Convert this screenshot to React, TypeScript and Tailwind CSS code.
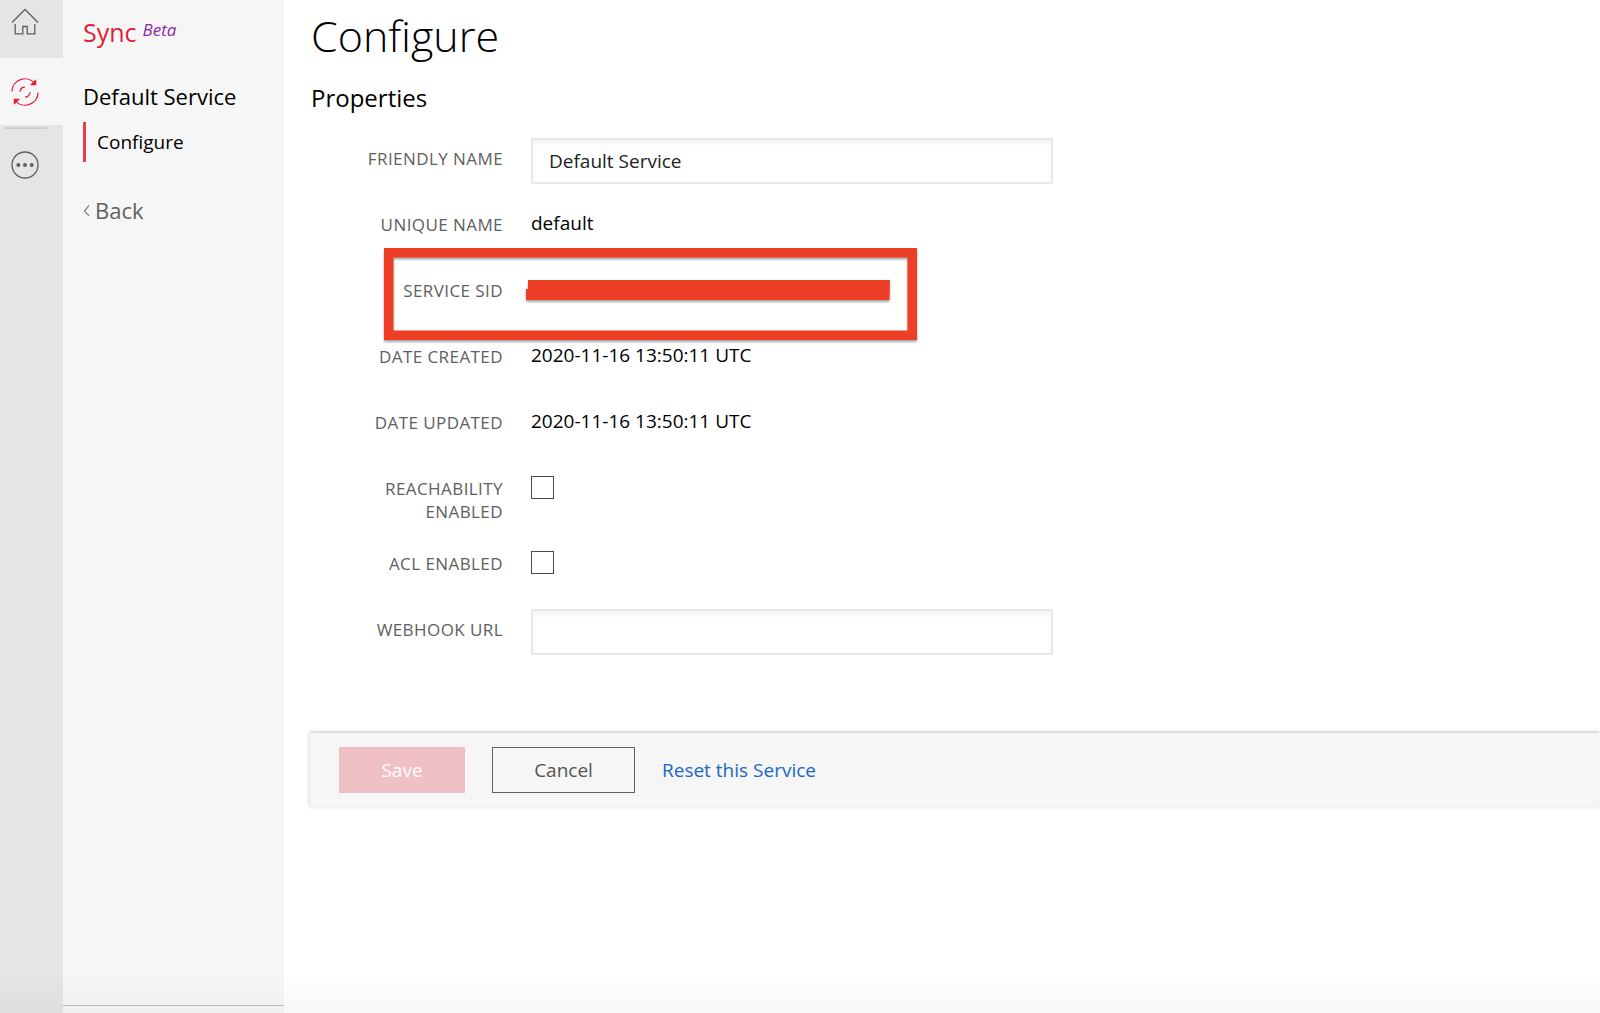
import React, { useState } from 'react';

const LABEL = 'w-[193px] shrink-0 pt-[9px] text-right text-[17px] leading-[23px] tracking-wide uppercase text-[#606060]';
const VALUE = 'pt-2 text-[19px] leading-[23px] text-black';
const INPUT = `h-[46px] w-full max-w-[522px] border-2 border-[#e8e8e8] bg-white px-4 text-[19px] text-[#222]
  shadow-[inset_0_3px_5px_rgba(0,0,0,0.05)] outline-none`;
const CHECKBOX = 'mt-2 h-[23px] w-[23px] appearance-none border border-[#4a4a4a] bg-white checked:bg-[#cf272d]';

function HomeIcon() {
    return (
        <svg width="28" height="28" viewBox="0 0 28 28" fill="none" stroke="#606060" strokeWidth="1.3">
            <path d="M1 14.5 14 1.5l13 13" />
            <path d="M4.2 16v9.8h7.6v-7.3h4.4v7.3h7.6V16" />
        </svg>
    );
}

function SyncIcon() {
    return (
        <svg width="28" height="28" viewBox="0 0 28 28" fill="none" stroke="#e01e37" strokeWidth="1.3">
            <path d="M.9 13.5A13 13 0 0 1 23.8 5.4" />
            <path d="M27.1 14.5A13 13 0 0 1 4.2 22.6" />
            <path d="M24.6 1.6v5.2h-5.2z" fill="#e01e37" stroke="none" />
            <path d="M19.6 6.6h5V2" />
            <path d="M8.4 21.4h-5V26" />
            <path d="M3.4 26.4v-5.2h5.2z" fill="#e01e37" stroke="none" />
            <path d="M9 13.8A5.2 5.2 0 0 1 13.8 9" />
            <path d="M19 14.2a5.2 5.2 0 0 1-4.8 4.8" />
        </svg>
    );
}

function MoreIcon() {
    return (
        <svg width="28" height="28" viewBox="0 0 28 28" fill="none" stroke="#606060" strokeWidth="1.3">
            <circle cx="14" cy="14" r="13" />
            <g fill="#606060" stroke="none">
                <circle cx="7.3" cy="14" r="2" />
                <circle cx="14" cy="14" r="2" />
                <circle cx="20.7" cy="14" r="2" />
            </g>
        </svg>
    );
}

function TextRow({ label, children }: { label: string; children: React.ReactNode }) {
    return (
        <div className="flex min-h-[46px] gap-7">
            <span className={LABEL}>{label}</span>
            <span className={VALUE}>{children}</span>
        </div>
    );
}

export default function App() {
    const [name, setName] = useState('Default Service');
    const [webhook, setWebhook] = useState('');

    return (
        <div className="relative flex min-h-screen bg-white font-['Open_Sans',sans-serif] text-black">
            {/* Icon rail */}
            <nav className="flex w-[63px] shrink-0 flex-col bg-[#e5e5e5]" aria-label="Products">
                <a href="#home" aria-label="Home" className="flex h-[58px] pt-2 pl-[11px]">
                    <HomeIcon />
                </a>
                <a href="#sync" aria-label="Sync" className="flex h-[67px] items-center bg-[#f6f6f6] pl-[11px]">
                    <SyncIcon />
                </a>
                <hr className="mt-0.5 ml-[5px] w-[42px] border-t-2 border-[#cdcdcd]" />
                <a href="#more" aria-label="More" className="mt-[22px] flex pl-[11px]">
                    <MoreIcon />
                </a>
            </nav>

            {/* Sidebar */}
            <aside className="flex w-[221px] shrink-0 flex-col bg-[#f6f6f6]">
                <div className="flex flex-1 flex-col items-start pl-5">
                    <div className="flex gap-1.5 pt-4">
                        <a href="#sync" className="text-[25px] leading-8 text-[#e01e37]">Sync</a>
                        <em className="text-[17px] leading-7 text-[#8a2aa8]">Beta</em>
                    </div>
                    <h2 className="mt-8 text-[22px] leading-8">Default Service</h2>
                    <a href="#configure" className="mt-2.5 border-l-[3px] border-[#e8404a] pl-[11px] text-[19px] leading-10">
                        Configure
                    </a>
                    <a href="#back" className="mt-8 flex items-center gap-1 text-[22px] leading-8 text-[#606060]">
                        <svg width="8" height="12" viewBox="0 0 8 12" fill="none" stroke="#808080" strokeWidth="1.2">
                            <path d="M6 1.5 1.5 7 6 12" />
                        </svg>
                        Back
                    </a>
                </div>
                <div className="h-2 border-t border-[#bdbdbd]" />
            </aside>

            {/* Main content */}
            <main className="min-w-0 flex-1 pl-[26px]">
                <h1 className="pt-2 pl-px text-[43px] leading-[56px] font-light">Configure</h1>
                <h2 className="mt-[18px] pl-px text-[24px] leading-8">Properties</h2>

                <form onSubmit={(e) => e.preventDefault()}>
                    <div className="mt-6 flex flex-col gap-5 pr-7">
                        <div className="flex gap-7">
                            <label htmlFor="friendly-name" className={LABEL}>Friendly Name</label>
                            <input
                                id="friendly-name"
                                type="text"
                                className={INPUT}
                                value={name}
                                onChange={(e) => setName(e.target.value)}
                            />
                        </div>
                        <TextRow label="Unique Name">default</TextRow>
                        <div className="relative flex min-h-[46px] gap-7">
                            <span className={LABEL}>Service SID</span>
                            {/* Highlight frame and covered SID */}
                            <svg
                                className="absolute -top-[26px] left-[70px] drop-shadow-[0_2px_1px_rgba(0,0,0,0.35)]"
                                width="541"
                                height="100"
                                viewBox="380 244 541 100"
                                fill="#ec3f25"
                            >
                                <path fillRule="evenodd" d="M384 248h533v92H384zM393.5 257.5v73h514v-73z" />
                                <path d="M528 280h362l-.5 20H526v-11h2z" />
                            </svg>
                        </div>
                        <TextRow label="Date Created">2020-11-16 13:50:11 UTC</TextRow>
                        <TextRow label="Date Updated">2020-11-16 13:50:11 UTC</TextRow>
                        <div className="flex gap-7">
                            <label htmlFor="reachability" className={LABEL}>
                                Reachability<br />Enabled
                            </label>
                            <input id="reachability" type="checkbox" className={CHECKBOX} />
                        </div>
                        <div className="flex min-h-[46px] gap-7">
                            <label htmlFor="acl" className={LABEL}>ACL Enabled</label>
                            <input id="acl" type="checkbox" className={CHECKBOX} />
                        </div>
                        <div className="flex gap-7">
                            <label htmlFor="webhook" className={LABEL}>Webhook URL</label>
                            <input
                                id="webhook"
                                type="text"
                                className={INPUT}
                                value={webhook}
                                onChange={(e) => setWebhook(e.target.value)}
                            />
                        </div>
                    </div>

                    <div className="mt-[78px] flex h-[74px] items-center gap-[27px] bg-[#f6f6f6] pl-[29px] shadow-[0_-1px_4px_rgba(0,0,0,0.25)]">
                        <button type="submit" disabled className="h-[46px] w-[126px] bg-[#efc0c4] text-[19px] text-white">
                            Save
                        </button>
                        <button type="button" className="h-[46px] w-[143px] border border-[#606060] text-[19px] text-[#555]">
                            Cancel
                        </button>
                        <a href="#reset" className="text-[19px] text-[#1866c9]">Reset this Service</a>
                    </div>
                </form>
            </main>

            <div className="pointer-events-none absolute inset-x-0 bottom-0 h-10 bg-linear-to-t from-black/3 to-transparent" />
        </div>
    );
}
